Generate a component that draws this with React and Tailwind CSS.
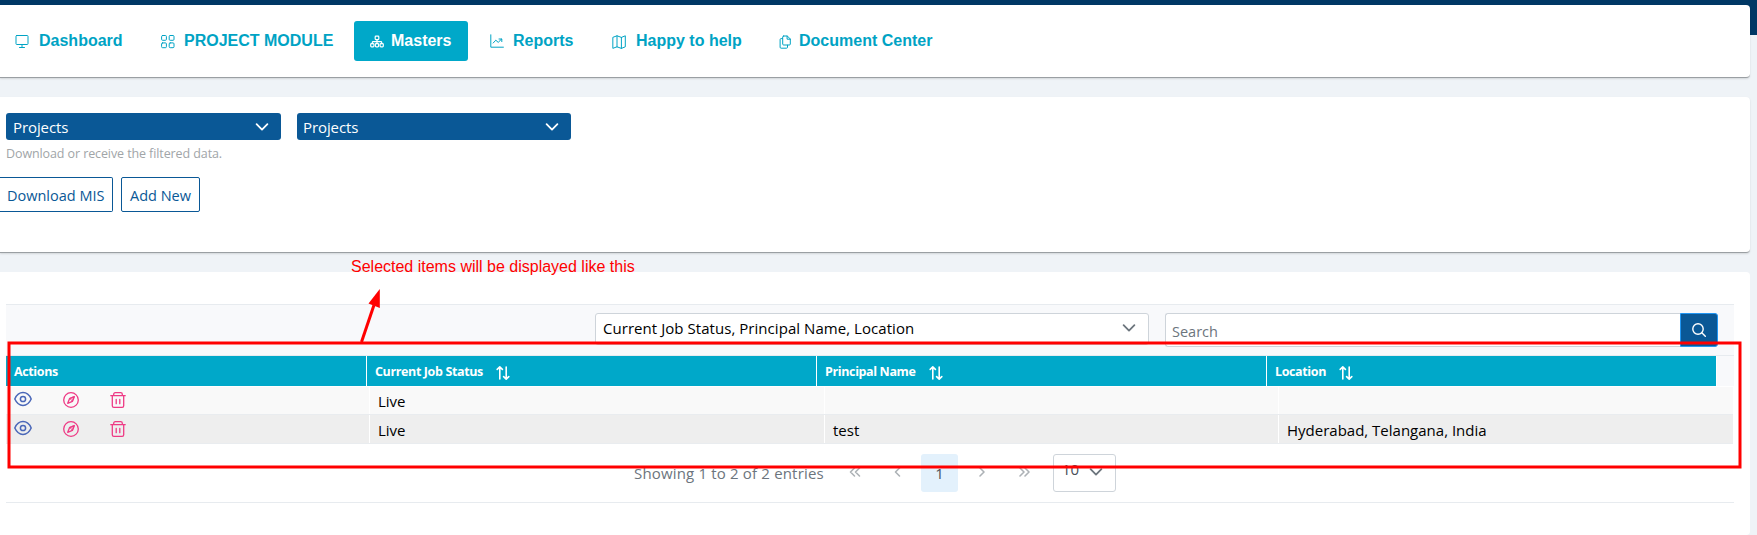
import React from 'react';

const stroke = { fill: 'none', stroke: 'currentColor', strokeLinecap: 'round', strokeLinejoin: 'round' };

function Icon({ className = '', size = 14, width = 1, children }) {
  return (
    <svg className={className} width={size} height={size} viewBox="0 0 14 14" strokeWidth={width} {...stroke}>
      {children}
    </svg>
  );
}

const DesktopIcon = () => (
  <Icon>
    <rect x="1" y="1.500" width="12" height="9" rx="0.8" />
    <path d="M7 10.500v3M4.500 13.500h5" />
  </Icon>
);
const GridIcon = () => (
  <Icon className="mt-[2px]">
    <rect x="0.6" y="0.500" width="4.800" height="4.800" rx="1" />
    <rect x="8.200" y="0.500" width="4.800" height="4.800" rx="1" />
    <rect x="0.6" y="7.900" width="4.800" height="4.800" rx="1" />
    <rect x="8.200" y="7.900" width="4.800" height="4.800" rx="1" />
  </Icon>
);
const SitemapIcon = () => (
  <Icon className="mt-[2px]" width={1.2}>
    <rect x="5.2" y="1.2" width="3.6" height="3.4" rx="0.8" />
    <rect x="0.7" y="8.6" width="3.2" height="3.2" rx="0.8" />
    <rect x="5.4" y="8.6" width="3.2" height="3.2" rx="0.8" />
    <rect x="10.1" y="8.6" width="3.2" height="3.2" rx="0.8" />
    <path d="M7 4.600v4M2.3 8.600V7.400q0-.8.8-.8h7.8q.8 0 .8.8V8.600" />
  </Icon>
);
const ChartIcon = () => (
  <Icon>
    <path d="M.8.8v12.4h12.6M3.2 9l2.6-2.8 2.4 2.2 3.4-3.4M9 5h2.8v2.6" />
  </Icon>
);
const MapIcon = () => (
  <Icon className="mt-px">
    <path d="M1.200 2.200 5 .8l4.400 1.600L13.300.8v11l-3.900 1.600L5 11.800l-3.800 1.400zM5 .8v11M9.400 2.400v11" />
  </Icon>
);
const CopyIcon = () => (
  <Icon className="mt-px">
    <path d="M5.700 1h3.600l3 3v5q0 1-1 1H5.700q-1 0-1-1V2q0-1 1-1zM9.100 1v3.200h3.200M4.500 3.600H3.100q-1 0-1 1v7.600q0 1 1 1h5.400q1 0 1-1V10.200" />
  </Icon>
);

const nav = [
  { label: 'Dashboard', icon: DesktopIcon, cls: 'w-[145px] pl-[15px] gap-[10px]' },
  { label: 'PROJECT MODULE', icon: GridIcon, cls: 'w-[209px] pl-[16px] gap-[9px]' },
  { label: 'Masters', icon: SitemapIcon, cls: 'w-[114px] pl-[16px] gap-[7px] rounded-[3px] bg-[#00a8c9] text-white' },
  { label: 'Reports', icon: ChartIcon, cls: 'w-[129px] pl-[22px] gap-[9px]' },
  { label: 'Happy to help', icon: MapIcon, cls: 'w-[165px] pl-[15px] gap-[10px]' },
  { label: 'Document Center', icon: CopyIcon, cls: 'pl-[16px] gap-[7px]' },
];

const Chevron = ({ className }) => (
  <svg className={className} width="14" height="14" viewBox="0 0 14 14" strokeWidth="1.800" {...stroke}>
    <path d="M1.600 4.200 7 9.600l5.400-5.400" />
  </svg>
);

function ProjectsSelect({ className }) {
  return (
    <div className={`flex h-[27px] items-center justify-between rounded-[3px] bg-[#0a5896] pr-3 text-[15px] text-white ${className}`}>
      <span className="pt-px tracking-[-0.1px]">Projects</span>
      <Chevron />
    </div>
  );
}

const SortIcon = () => (
  <svg className="mt-[3px]" width="14" height="14" viewBox="0 0 14 14" strokeWidth="1.600" {...stroke}>
    <path d="M3.8 13V1M1.2 3.4 3.8.9l2.6 2.5M10.2 1v12M7.6 10.6l2.6 2.5 2.6-2.5" />
  </svg>
);

const EyeIcon = () => (
  <svg className="text-[#4a67b8]" width="18" height="16" viewBox="0 0 18 16" strokeWidth="1.500" {...stroke}>
    <path d="M.8 8C2.600 4 5.600 1.600 9 1.600S15.400 4 17.200 8C15.400 12 12.400 14.400 9 14.400S2.600 12 .8 8z" />
    <circle cx="9" cy="8" r="2.600" />
  </svg>
);
const CompassIcon = () => (
  <svg className="text-[#ee3a85]" width="16" height="16" viewBox="0 0 16 16" strokeWidth="1.300" {...stroke}>
    <circle cx="8" cy="8" r="7.300" />
    <path d="M11.300 4.700 9.400 9.400 4.700 11.300 6.600 6.600z" />
    <path d="M11.300 4.700 9.400 9.400 6.600 6.600z" fill="currentColor" fillOpacity="0.35" strokeWidth="0.600" />
  </svg>
);
const TrashIcon = () => (
  <svg className="text-[#ee3a85]" width="16" height="16" viewBox="0 0 16 16" strokeWidth="1.300" {...stroke}>
    <path d="M.8 3.700h14.400M2.300 3.700v10q0 1.600 1.600 1.600h8.200q1.600 0 1.600-1.600v-10M3.700 3.700V2.300q0-1.600 1.600-1.600h5.400q1.600 0 1.600 1.600v1.400M6.200 7.500v4.200M9.800 7.500v4.200" />
  </svg>
);

const rows = [
  { status: 'Live', principal: '', location: '' },
  { status: 'Live', principal: 'test', location: 'Hyderabad, Telangana, India' },
];

const Pager = ({ d, className }) => (
  <svg className={`text-[#adb2b6] ${className}`} width="12" height="12" viewBox="0 0 12 12" strokeWidth="1.600" {...stroke}>
    <path d={d} />
  </svg>
);

export default function App() {
  return (
    <div className="relative h-[535px] w-[1757px] overflow-hidden bg-[linear-gradient(#003865_35px,#eff3f7_35px)] pt-[5px] font-['Open_Sans',sans-serif] text-black">
      <nav className="flex h-[73px] w-[1750px] items-start rounded-r-[4px] border-b border-[#9a9fa3] bg-white pt-4 font-['Liberation_Sans',sans-serif] text-[16px] font-bold text-[#00a3c4] shadow-[0_1px_2px_rgba(0,0,0,0.12)]">
        {nav.map(({ label, icon: I, cls }) => (
          <a key={label} className={`flex h-10 shrink-0 items-center whitespace-nowrap ${cls}`}>
            <I />
            <span className="leading-[40px]">{label}</span>
          </a>
        ))}
      </nav>

      <section className="mt-[19px] h-[156px] w-[1750px] rounded-r-[4px] border-b border-[#9a9fa3] bg-white pt-4 shadow-[0_1px_2px_rgba(0,0,0,0.12)]">
        <div className="flex gap-4 pl-[6px]">
          <ProjectsSelect className="w-[275px] pl-[7px]" />
          <ProjectsSelect className="w-[274px] pl-[6px]" />
        </div>
        <p className="mt-[4px] pl-[6px] text-[12.5px] leading-[20px] tracking-[-0.1px] text-[#a1a5a8]">Download or receive the filtered data.</p>
        <div className="mt-[13px] flex gap-2 text-[14.5px] text-[#0a5896]">
          <button className="h-[35px] w-[113px] rounded-r-[2px] border border-l-0 border-[#0a5896] pl-[7px] pt-[2px] text-left whitespace-nowrap">Download MIS</button>
          <button className="h-[35px] w-[79px] rounded-[2px] border border-[#0a5896] pl-[8px] pt-[2px] text-left whitespace-nowrap">Add New</button>
        </div>
      </section>

      <section className="mt-[19px] h-[263px] w-[1750px] rounded-r-[4px] bg-white pl-[6px] pt-8">
        <div className="flex h-[52px] w-[1728px] items-start border-y border-[#e7ebef] bg-[#f8f9fb] pl-[589px] pt-2">
          <div className="flex h-[32px] w-[554px] justify-between rounded-[3px] border border-[#ced4da] bg-white pl-[7px] pr-[12px] text-[15px] leading-[29px]">
            <span className="tracking-[0.05px]">Current Job Status, Principal Name, Location</span>
            <Chevron className="mt-[7px] text-[#6c757d]" />
          </div>
          <div className="ml-4 flex h-[34px] w-[553px]">
            <div className="flex-1 rounded-l-[3px] border border-r-0 border-[#ced4da] bg-white pl-[6px] text-[14.5px] leading-[35px] text-[#6c757d]">Search</div>
            <button className="flex w-[38px] items-center justify-center rounded-r-[3px] border border-[#2196f3] bg-[#0a5896] text-white">
              <svg width="14" height="14" viewBox="0 0 14 14" strokeWidth="1.400" {...stroke}>
                <circle cx="6" cy="6" r="5.200" />
                <path d="m9.800 9.800 3.500 3.500" />
              </svg>
            </button>
          </div>
        </div>

        <div className="flex h-[31px] w-[1728px] border-b border-white bg-[#f8f9fb] text-[12.5px] font-bold leading-[31px] tracking-[-0.37px] text-white">
          <div className="w-[361px] border-r border-white bg-[#00a8c9] pl-2">Actions</div>
          {['Current Job Status', 'Principal Name', 'Location'].map((h) => (
            <div key={h} className="flex w-[450px] items-center gap-[13px] border-r border-white bg-[#00a8c9] pl-2">
              <span>{h}</span>
              <SortIcon />
            </div>
          ))}
        </div>

        {rows.map((r, i) => (
          <div
            key={i}
            className={`flex w-[1727px] text-[15px] ${i ? 'h-[29px] border-b border-[#e9ecef] bg-[#eeeeee] leading-[31px]' : 'h-[28px] border-b border-[#e9ecef] bg-[#f9f9f9] leading-[29px]'}`}
          >
            <div className={`flex w-[364px] items-start border-r border-white pl-[8px] ${i ? 'pt-[5px]' : 'pt-[4px]'}`}>
              <EyeIcon />
              <span className="ml-[31px] pt-[1px]"><CompassIcon /></span>
              <span className="ml-[31px] pt-[1px]"><TrashIcon /></span>
            </div>
            <div className="w-[455px] border-r border-white pl-[8px]">{r.status}</div>
            <div className="w-[454px] border-r border-white pl-[8px]">{r.principal}</div>
            <div className="pl-[8px]">{r.location}</div>
          </div>
        ))}

        <div className="flex h-[59px] w-[1728px] items-start border-b border-[#e7ebef] pl-[628px] pt-[10px] text-[15px] text-[#6c757d]">
          <span className="w-[215px] leading-[39px] tracking-[0.17px]">Showing 1 to 2 of 2 entries</span>
          <Pager className="mt-[12px]" d="M5.500 2 1.500 6l4 4M10.500 2 6.500 6l4 4" />
          <Pager className="ml-[31px] mt-[12px]" d="M7.500 2 3.500 6l4 4" />
          <span className="ml-[17px] h-[38px] w-[37px] rounded-[3px] bg-[#e3f1fc] text-center leading-[39px] text-[#495057]">1</span>
          <Pager className="ml-[18px] mt-[12px]" d="M4 2l4 4-4 4" />
          <Pager className="ml-[31px] mt-[12px]" d="M1 2l4 4-4 4M6 2l4 4-4 4" />
          <span className="ml-[22px] flex h-[38px] w-[63px] rounded-[3px] border border-[#ced4da] pl-[8px] leading-[29px] text-[#495057]">
            <span className="w-[27px]">10</span>
            <Chevron className="mt-[10px] text-[#6c757d]" />
          </span>
        </div>
      </section>

      <svg className="pointer-events-none absolute inset-0" width="1757" height="535" fill="none">
        <rect x="9" y="343" width="1731" height="124" stroke="#ff0000" strokeWidth="3" />
        <path d="M361.500 342 374 305" stroke="#ff0000" strokeWidth="3" />
        <path d="M379.800 289 379.800 308 368.500 303.500z" fill="#ff0000" />
      </svg>
      <p className="absolute left-[351px] top-[257px] whitespace-nowrap font-['Liberation_Sans',sans-serif] text-[16px] leading-[20px] text-[#ff0000]">
        Selected items will be displayed like this
      </p>
    </div>
  );
}
